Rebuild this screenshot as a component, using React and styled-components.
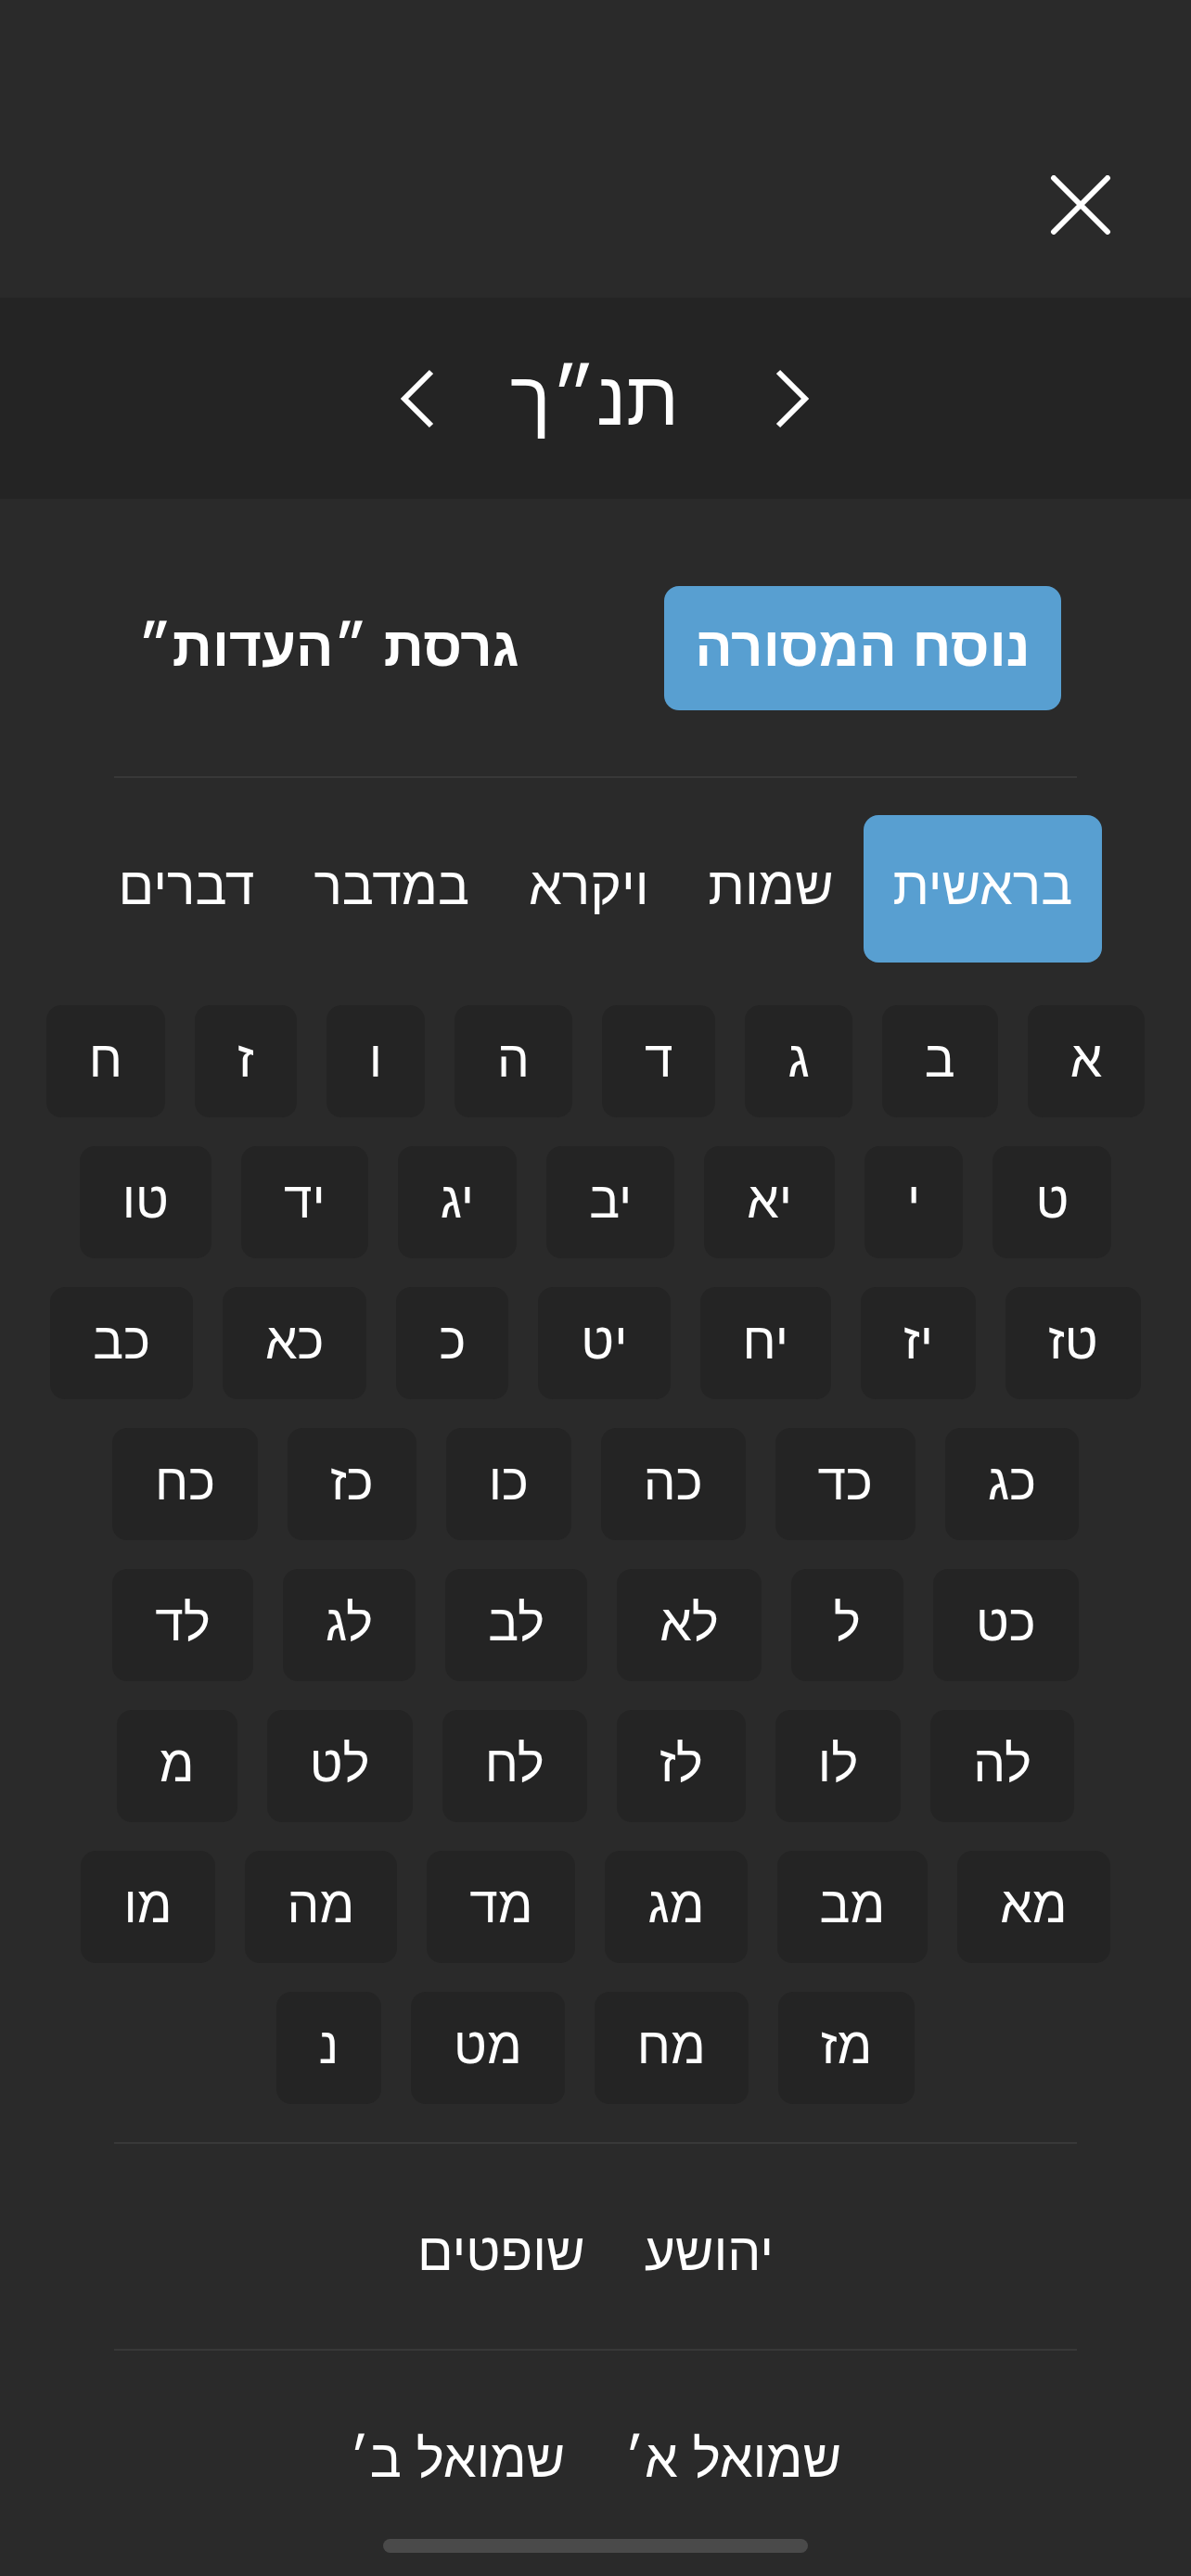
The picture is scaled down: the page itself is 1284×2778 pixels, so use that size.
import styled, { createGlobalStyle } from "styled-components";

const GlobalStyle = createGlobalStyle`
  html, body {
    margin: 0;
    padding: 0;
    background: #2a2a2a;
  }
  body {
    font-family: "Liberation Sans", "DejaVu Sans", sans-serif;
    color: #ffffff;
    direction: rtl;
  }
`;

const TORAH = ["בראשית", "שמות", "ויקרא", "במדבר", "דברים"];

const CHAPTERS = [
  "א", "ב", "ג", "ד", "ה", "ו", "ז", "ח", "ט", "י",
  "יא", "יב", "יג", "יד", "טו", "טז", "יז", "יח", "יט", "כ",
  "כא", "כב", "כג", "כד", "כה", "כו", "כז", "כח", "כט", "ל",
  "לא", "לב", "לג", "לד", "לה", "לו", "לז", "לח", "לט", "מ",
  "מא", "מב", "מג", "מד", "מה", "מו", "מז", "מח", "מט", "נ",
];

// the grid wraps like this in the app at this width
const ROW_SIZES = [8, 7, 7, 6, 6, 6, 6, 4];

function chunk(list, sizes) {
  const rows = [];
  let i = 0;
  sizes.forEach((n) => {
    rows.push(list.slice(i, i + n));
    i += n;
  });
  return rows;
}

const CloseIcon = () => (
  <svg width="66" height="64" viewBox="0 0 66 64">
    <path d="M4 3 L62 61 M62 3 L4 61" stroke="#fff" strokeWidth="6" strokeLinecap="round" fill="none" />
  </svg>
);

const Chevron = ({ dir }) => (
  <svg width="40" height="64" viewBox="0 0 40 64">
    <polyline
      points={dir === "left" ? "35,3 6,32 35,61" : "5,3 34,32 5,61"}
      stroke="#fff"
      strokeWidth="6"
      fill="none"
    />
  </svg>
);

export default function App() {
  const rows = chunk(CHAPTERS, ROW_SIZES);

  return (
    <Screen>
      <GlobalStyle />

      {/* ---------- CLOSE ---------- */}
      <TopBar>
        <IconButton>
          <CloseIcon />
        </IconButton>
      </TopBar>

      {/* ---------- TITLE ---------- */}
      <Header>
        <IconButton>
          <Chevron dir="right" />
        </IconButton>
        <Title>תנ״ך</Title>
        <IconButton>
          <Chevron dir="left" />
        </IconButton>
      </Header>

      {/* ---------- VERSION ---------- */}
      <VersionRow>
        <VersionSlot>
          <VersionOption $active>נוסח המסורה</VersionOption>
        </VersionSlot>
        <VersionSlot>
          <VersionOption>גרסת ״העדות״</VersionOption>
        </VersionSlot>
      </VersionRow>

      <Divider />

      {/* ---------- TORAH ---------- */}
      <Section>
        <TabRow>
          {TORAH.map((name, i) => (
            <Tab key={name} $active={i === 0}>
              {name}
            </Tab>
          ))}
        </TabRow>

        <ChapterGrid>
          {rows.map((row, r) => (
            <ChapterRow key={r}>
              {row.map((c) => (
                <Chapter key={c}>{c}</Chapter>
              ))}
            </ChapterRow>
          ))}
        </ChapterGrid>
      </Section>

      <Divider />

      <Section $compact>
        <TabRow>
          <Tab>יהושע</Tab>
          <Tab>שופטים</Tab>
        </TabRow>
      </Section>

      <Divider />

      <Section $compact>
        <TabRow>
          <Tab>שמואל א׳</Tab>
          <Tab>שמואל ב׳</Tab>
        </TabRow>
      </Section>

      <HomeIndicator />
    </Screen>
  );
}

const Screen = styled.div`
  min-height: 2778px;
  background: #2a2a2a;
  display: flex;
  flex-direction: column;
`;

const TopBar = styled.div`
  height: 321px;
  box-sizing: border-box;
  display: flex;
  align-items: flex-end;
  padding: 0 86px 68px;
`;

const IconButton = styled.div`
  display: flex;
  align-items: center;
  justify-content: center;
`;

const Header = styled.div`
  height: 217px;
  background: #242424;
  display: flex;
  align-items: center;
  justify-content: center;
  padding-left: 20px;
`;

const Title = styled.h1`
  margin: 0 102px 0 80px;
  font-size: 82px;
  font-weight: 400;
  line-height: 1;
`;

const VersionRow = styled.div`
  display: flex;
  padding: 94px 66px 71px;
`;

const VersionSlot = styled.div`
  flex: 1;
  display: flex;
  justify-content: center;
`;

const VersionOption = styled.div`
  height: 134px;
  box-sizing: border-box;
  display: flex;
  align-items: center;
  padding: 0 33px 4px;
  border-radius: 16px;
  font-size: 60px;
  font-weight: 700;
  background: ${(p) => (p.$active ? "#589fd1" : "transparent")};
`;

const Divider = styled.div`
  height: 2px;
  margin: 0 123px;
  background: #383838;
`;

const Section = styled.section`
  padding: 40px 0 ${(p) => (p.$compact ? "22px" : "41px")};
`;

const TabRow = styled.div`
  display: flex;
  justify-content: center;
`;

const Tab = styled.div`
  height: 159px;
  box-sizing: border-box;
  display: flex;
  align-items: center;
  padding: 0 32px 8px;
  border-radius: 16px;
  font-size: 57px;
  white-space: nowrap;
  background: ${(p) => (p.$active ? "#589fd1" : "transparent")};
`;

const ChapterGrid = styled.div`
  margin-top: 46px;
  display: flex;
  flex-direction: column;
  gap: 31px;
`;

const ChapterRow = styled.div`
  display: flex;
  justify-content: center;
  gap: 32px;
`;

const Chapter = styled.div`
  height: 121px;
  box-sizing: border-box;
  display: flex;
  align-items: center;
  justify-content: center;
  padding: 0 46px 5px;
  border-radius: 16px;
  background: #242424;
  font-size: 55px;
`;

const HomeIndicator = styled.div`
  position: fixed;
  left: 50%;
  bottom: 25px;
  transform: translateX(-50%);
  width: 458px;
  height: 15px;
  border-radius: 8px;
  background: #4a4a4a;
`;
